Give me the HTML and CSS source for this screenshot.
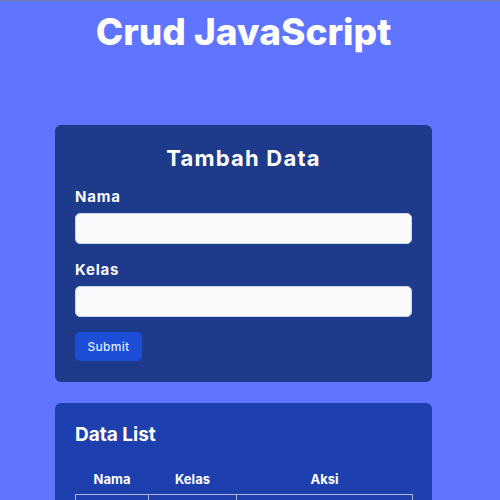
FILE: index.html
```html
<!DOCTYPE html>
<html lang="id">
<head>
<meta charset="utf-8">
<title>Crud JavaScript</title>
<link rel="stylesheet" href="styles.css">
</head>
<body>
<h1 class="page-title">Crud JavaScript</h1>
<main class="container">
  <section class="card card-form">
    <h2 class="card-title">Tambah Data</h2>
    <form class="form">
      <label class="label" for="nama">Nama</label>
      <input class="input" id="nama" type="text">
      <label class="label label-kelas" for="kelas">Kelas</label>
      <input class="input" id="kelas" type="text">
      <button class="btn" type="button">Submit</button>
    </form>
  </section>
  <section class="card card-list">
    <h3 class="list-title">Data List</h3>
    <table class="table">
      <thead>
        <tr><th class="col-nama">Nama</th><th class="col-kelas">Kelas</th><th class="col-aksi">Aksi</th></tr>
      </thead>
      <tbody>
        <tr><td></td><td></td><td></td></tr>
      </tbody>
    </table>
  </section>
</main>
</body>
</html>
```
FILE: styles.css
```css
* { box-sizing: border-box; }
html, body { margin: 0; }
body {
  background: #6075ff;
  border-top: 1px solid #7081a9;
  padding-right: 13px;
  font-family: Inter, "Noto Sans", sans-serif;
  color: #ffffff;
}
.page-title {
  margin: 8px 0 70px;
  font-size: 37px;
  line-height: 46px;
  font-weight: 800;
  text-align: center;
  letter-spacing: 0;
}
.container {
  width: 377px;
  margin: 0 auto;
}
.card {
  border-radius: 6px;
  padding: 19px 20px 21px;
}
.card-form { background: #1e3a8a; }
.card-list { background: #1e40af; margin-top: 21px; height: 200px; }
.card-title {
  margin: 0 0 15px;
  font-size: 22px;
  line-height: 28px;
  font-weight: 700;
  text-align: center;
  letter-spacing: 1.2px;
}
.form { display: flex; flex-direction: column; align-items: flex-start; }
.label {
  font-size: 15px;
  line-height: 20px;
  font-weight: 700;
  color: #f8fafc;
  margin-bottom: 6px;
  letter-spacing: 0.8px;
}
.label-kelas { margin-top: 16px; }
.input {
  width: 100%;
  height: 31px;
  border: 1px solid #cbd5e1;
  border-radius: 5px;
  background: #f8fafc;
}
.btn {
  margin-top: 15px;
  width: 67px;
  height: 29px;
  border: 0;
  border-radius: 5px;
  background: #1d4ed8;
  color: #dbeafe;
  font-family: Inter, "Noto Sans", sans-serif;
  font-size: 12px;
  font-weight: 500;
  letter-spacing: 0.3px;
}
.list-title {
  margin: 0 0 13px;
  font-size: 19px;
  line-height: 26px;
  font-weight: 700;
}
.table {
  width: 337px;
  border-collapse: collapse;
  table-layout: fixed;
}
.table th {
  padding: 10px 4px 7px;
  font-size: 13px;
  line-height: 16px;
  font-weight: 700;
  text-align: center;
}
.col-nama { width: 73px; }
.col-kelas { width: 88px; }
.col-aksi { width: 176px; }
.table td {
  border: 1px solid #aab4e0;
  height: 40px;
}
```
